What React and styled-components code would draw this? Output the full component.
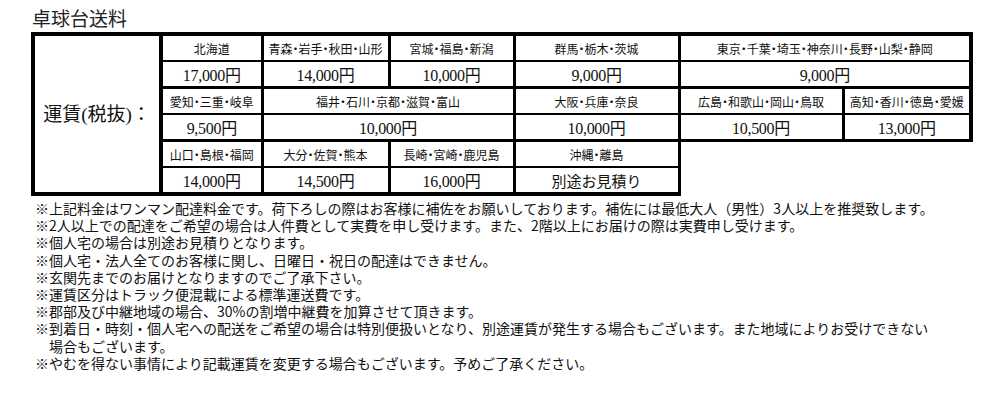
import React from 'react'
import styled, { createGlobalStyle } from 'styled-components'

const GlobalStyle = createGlobalStyle`
  html, body {
    margin: 0;
    padding: 0;
    background: #fff;
  }
  body {
    font-family: "Noto Sans CJK JP", sans-serif;
    color: #111;
  }
`

const Page = styled.div`
  width: 1000px;
  height: 400px;
  padding: 6px 0 0 31px;
  box-sizing: border-box;
  overflow: hidden;
`

const Title = styled.h2`
  margin: 0 0 2px 1px;
  font-size: 19px;
  font-weight: 400;
  line-height: 24px;
  color: #222;
`

const Table = styled.table`
  border-collapse: collapse;
  table-layout: fixed;
  width: 938px;
`

const LabelCell = styled.td`
  border: 4px solid #000;
  text-align: center;
  vertical-align: middle;
  font-size: 19px;
  font-weight: 400;
  padding: 0 0 4px;
  font-family: "Liberation Serif", "Noto Sans CJK JP", serif;
  color: #111;
`

const NameCell = styled.td`
  height: 24px;
  padding: 0;
  border-left: 3px solid #000;
  border-right: ${p => (p.$last ? '4px' : '3px')} solid #000;
  border-top: ${p => (p.$first ? '4px' : '3px')} solid #000;
  border-bottom: 2px solid #000;
  text-align: center;
  font-size: 12px;
  font-feature-settings: "palt";
  white-space: nowrap;
`

const PriceCell = styled.td`
  height: 24px;
  padding: 0;
  border-left: 3px solid #000;
  border-right: ${p => (p.$last ? '4px' : '3px')} solid #000;
  border-top: 2px solid #000;
  border-bottom: ${p => (p.$bottom ? '4px' : '3px')} solid #000;
  text-align: center;
  font-family: "Liberation Serif", "Noto Sans CJK JP", serif;
  font-size: ${p => (p.$text ? '15px' : '16px')};
  letter-spacing: ${p => (p.$text ? '0' : '-0.3px')};
  white-space: nowrap;
`

const EmptyCell = styled.td`
  border: none;
  padding: 0;
`

const Notes = styled.ul`
  list-style: none;
  margin: 4px 0 0 4px;
  padding: 0;
  font-size: 14px;
  line-height: 17.2px;
  color: #111;
`

const Note = styled.li`
  padding-left: 1em;
  text-indent: -1em;
  white-space: nowrap;
`

const groups = [
  [
    { name: '北海道', price: '17,000円' },
    { name: '青森・岩手・秋田・山形', price: '14,000円' },
    { name: '宮城・福島・新潟', price: '10,000円' },
    { name: '群馬・栃木・茨城', price: '9,000円' },
    { name: '東京・千葉・埼玉・神奈川・長野・山梨・静岡', price: '9,000円', span: 2 },
  ],
  [
    { name: '愛知・三重・岐阜', price: '9,500円' },
    { name: '福井・石川・京都・滋賀・富山', price: '10,000円', span: 2 },
    { name: '大阪・兵庫・奈良', price: '10,000円' },
    { name: '広島・和歌山・岡山・鳥取', price: '10,500円' },
    { name: '高知・香川・徳島・愛媛', price: '13,000円' },
  ],
  [
    { name: '山口・島根・福岡', price: '14,000円' },
    { name: '大分・佐賀・熊本', price: '14,500円' },
    { name: '長崎・宮崎・鹿児島', price: '16,000円' },
    { name: '沖縄・離島', price: '別途お見積り', text: true },
  ],
]

const notes = [
  '※上記料金はワンマン配達料金です。荷下ろしの際はお客様に補佐をお願いしております。補佐には最低大人（男性）3人以上を推奨致します。',
  '※2人以上での配達をご希望の場合は人件費として実費を申し受けます。また、2階以上にお届けの際は実費申し受けます。',
  '※個人宅の場合は別途お見積りとなります。',
  '※個人宅・法人全てのお客様に関し、日曜日・祝日の配達はできません。',
  '※玄関先までのお届けとなりますのでご了承下さい。',
  '※運賃区分はトラック便混載による標準運送費です。',
  '※郡部及び中継地域の場合、30%の割増中継費を加算させて頂きます。',
]

const colWidths = [128, 101, 127, 125, 165, 164, 128]

const App = () => {
  return (
    <>
      <GlobalStyle />
      <Page>
        <Title>卓球台送料</Title>
        <Table>
          <colgroup>
            {colWidths.map((w, i) => (
              <col key={i} style={{ width: w }} />
            ))}
          </colgroup>
          <tbody>
            {groups.map((group, gi) => {
              const filled = group.reduce((n, c) => n + (c.span || 1), 0)
              const spare = 6 - filled
              return (
                <React.Fragment key={gi}>
                  <tr>
                    {gi === 0 && <LabelCell rowSpan={6}>運賃(税抜)：</LabelCell>}
                    {group.map((c, ci) => (
                      <NameCell
                        key={ci}
                        colSpan={c.span || 1}
                        $first={gi === 0}
                        $last={ci === group.length - 1 && spare === 0}
                      >
                        {c.name}
                      </NameCell>
                    ))}
                    {spare > 0 && <EmptyCell colSpan={spare} />}
                  </tr>
                  <tr>
                    {group.map((c, ci) => (
                      <PriceCell
                        key={ci}
                        colSpan={c.span || 1}
                        $last={ci === group.length - 1 && spare === 0}
                        $bottom={gi === groups.length - 1}
                        $text={c.text}
                      >
                        {c.price}
                      </PriceCell>
                    ))}
                    {spare > 0 && <EmptyCell colSpan={spare} />}
                  </tr>
                </React.Fragment>
              )
            })}
          </tbody>
        </Table>
        <Notes>
          {notes.map((n, i) => (
            <Note key={i}>{n}</Note>
          ))}
          <Note>
            ※到着日・時刻・個人宅への配送をご希望の場合は特別便扱いとなり、別途運賃が発生する場合もございます。また地域によりお受けできない
            <br />
            場合もございます。
          </Note>
          <Note>※やむを得ない事情により記載運賃を変更する場合もございます。予めご了承ください。</Note>
        </Notes>
      </Page>
    </>
  )
}

export default App
